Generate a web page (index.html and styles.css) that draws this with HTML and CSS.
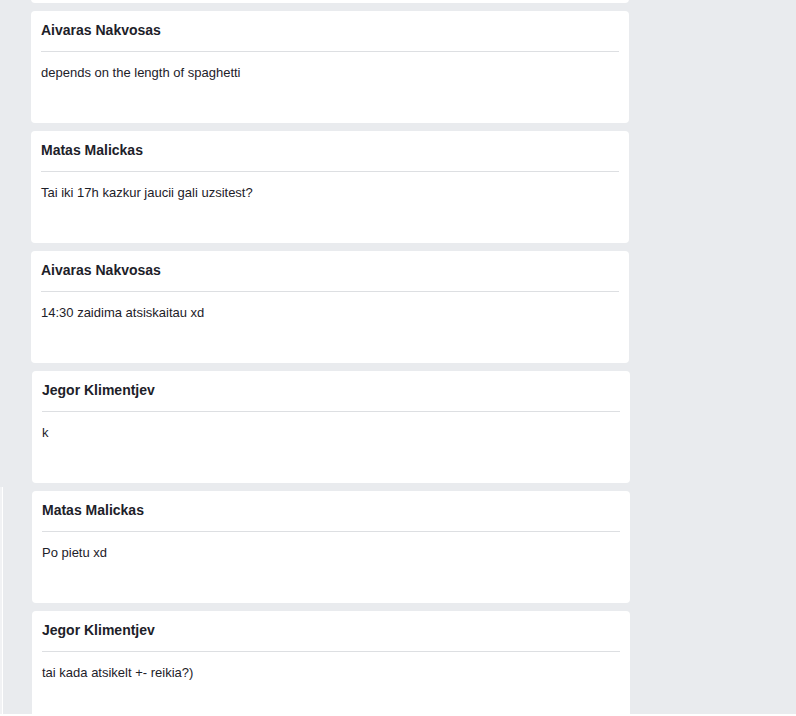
FILE: index.html
```html
<!DOCTYPE html>
<html lang="lt">
<head>
<meta charset="utf-8">
<title>Messages</title>
<link rel="stylesheet" href="styles.css">
</head>
<body>
<div class="feed">
  <div class="side-rule"></div>
  <div class="list">
    <div class="card card-tail"></div>
    <div class="card">
      <div class="card-head">Aivaras Nakvosas</div>
      <div class="card-body">depends on the length of spaghetti</div>
    </div>
    <div class="card">
      <div class="card-head">Matas Malickas</div>
      <div class="card-body">Tai iki 17h kazkur jaucii gali uzsitest?</div>
    </div>
    <div class="card">
      <div class="card-head">Aivaras Nakvosas</div>
      <div class="card-body">14:30 zaidima atsiskaitau xd</div>
    </div>
    <div class="card card-shift">
      <div class="card-head">Jegor Klimentjev</div>
      <div class="card-body">k</div>
    </div>
    <div class="card card-shift">
      <div class="card-head">Matas Malickas</div>
      <div class="card-body">Po pietu xd</div>
    </div>
    <div class="card card-shift">
      <div class="card-head">Jegor Klimentjev</div>
      <div class="card-body">tai kada atsikelt +- reikia?)</div>
    </div>
  </div>
</div>
</body>
</html>
```
FILE: styles.css
```css
html, body {
  margin: 0;
  padding: 0;
  background: #ffffff;
}

body {
  font-family: "Liberation Sans", Arial, sans-serif;
  color: #1d2129;
}

.feed {
  position: relative;
  height: 714px;
  overflow: hidden;
  background: #e9ebee;
}

.side-rule {
  position: absolute;
  top: 487px;
  left: 0;
  bottom: 0;
  width: 2px;
  background: #f1f2f4;
  border-right: 1px solid #ffffff;
}

.list {
  display: flex;
  flex-direction: column;
  gap: 8px;
  margin-top: -109px;
  padding-left: 31px;
}

.card {
  width: 598px;
  min-height: 112px;
  box-sizing: border-box;
  padding: 0 10px;
  background: #ffffff;
  border-radius: 4px;
}

.card-shift {
  margin-left: 1px;
}

.card-head {
  padding: 11px 0 13px;
  border-bottom: 1px solid #dddfe2;
  font-size: 14px;
  line-height: 16px;
  font-weight: bold;
}

.card-body {
  padding-top: 13px;
  font-size: 13px;
  line-height: 15px;
}
```
